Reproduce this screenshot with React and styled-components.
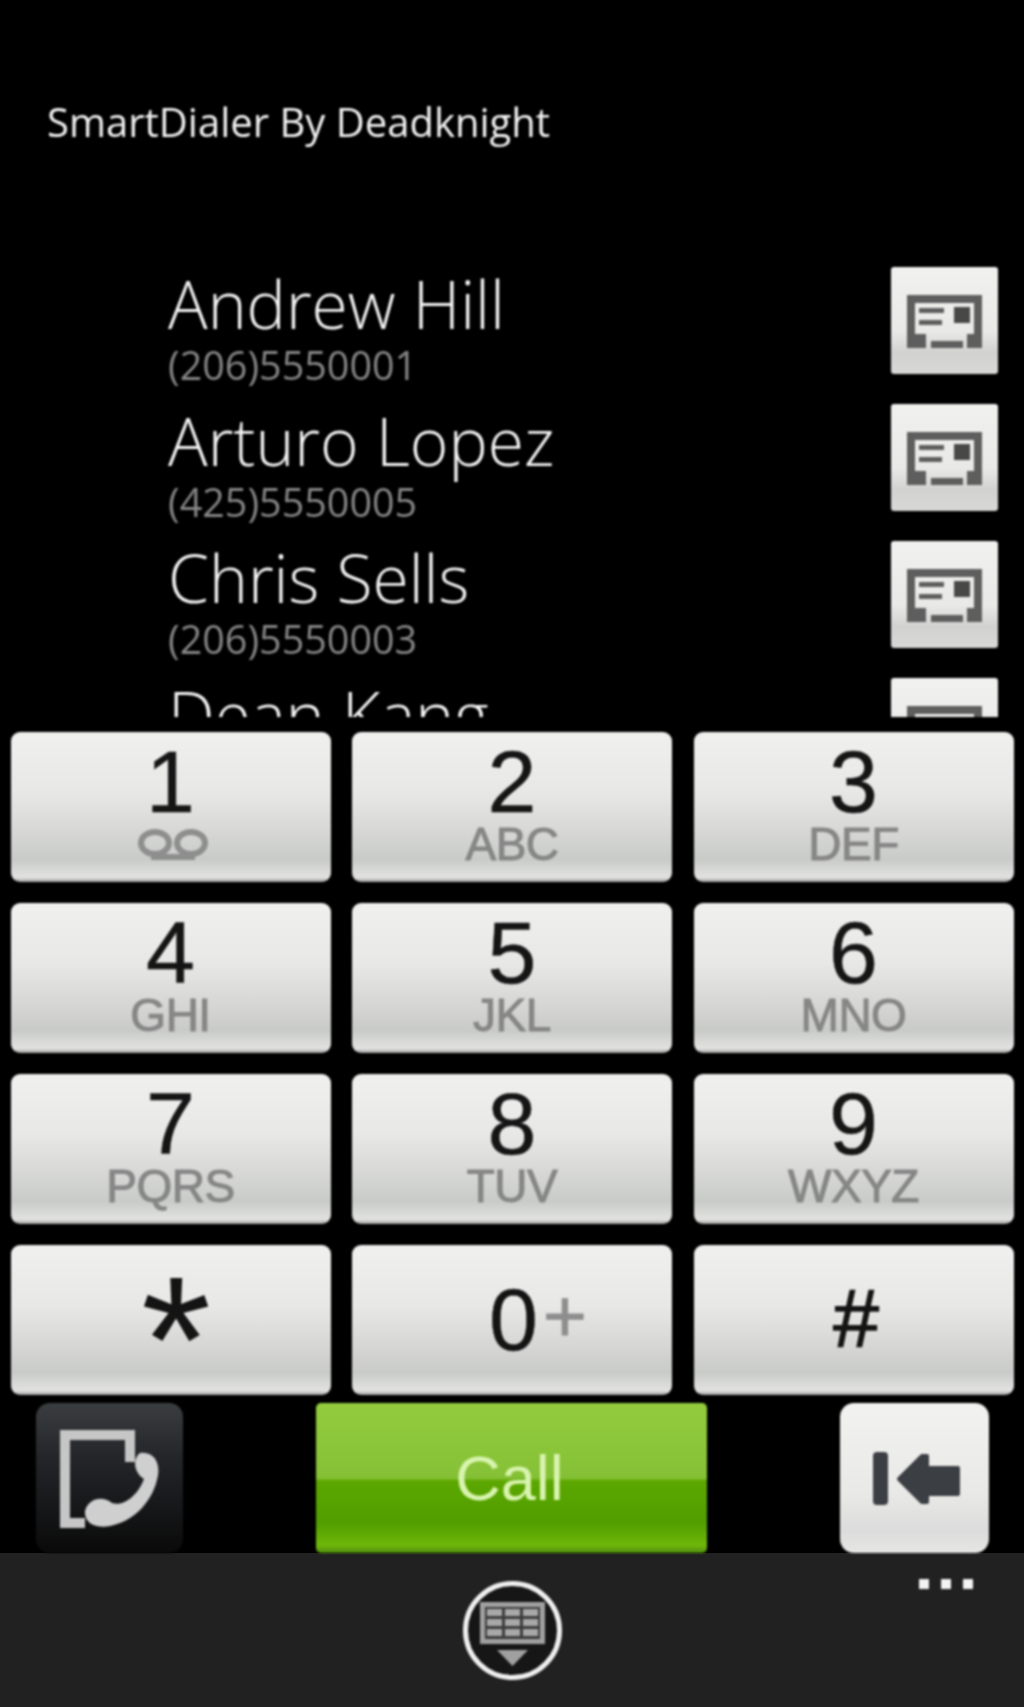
import React from "react";
import styled, { createGlobalStyle } from "styled-components";

const Global = createGlobalStyle`
  html, body {
    margin: 0;
    padding: 0;
    background: #000;
  }
`;

const Page = styled.div`
  width: 1024px;
  height: 1707px;
  background: #000;
  display: flex;
  flex-direction: column;
  overflow: hidden;
`;

const Main = styled.div`
  filter: blur(0.8px);
  flex-shrink: 0;
`;

const Title = styled.div`
  padding: 97px 0 0 47px;
  height: 71px;
  font-family: "Open Sans", sans-serif;
  font-size: 40px;
  line-height: 50px;
  color: #f2f2f2;
`;

const List = styled.div`
  height: 549px;
  padding-top: 99px;
  box-sizing: border-box;
  overflow: hidden;
  display: flex;
  flex-direction: column;
  gap: 30px;
  flex-shrink: 0;
`;

const Row = styled.div`
  display: flex;
  justify-content: space-between;
  align-items: center;
  height: 107px;
  flex-shrink: 0;
  padding: 0 26px 0 168px;
`;

const Person = styled.div`
  display: flex;
  flex-direction: column;
  padding-top: 8px;
`;

const Name = styled.div`
  font-family: "Open Sans", sans-serif;
  font-weight: 300;
  font-size: 66px;
  line-height: 76px;
  color: #f4f4f4;
`;

const Phone = styled.div`
  font-family: "Open Sans", sans-serif;
  font-size: 39.5px;
  line-height: 40px;
  margin-top: 4px;
  color: #858585;
`;

const CardButton = styled.div`
  width: 107px;
  height: 107px;
  box-sizing: border-box;
  border-radius: 3px;
  background: linear-gradient(#f1f1ef 0%, #e9e9e7 60%, #d2d3d1 80%, #d8d8d6 100%);
  display: flex;
  justify-content: center;
  padding-top: 28px;
  flex-shrink: 0;
`;

const Keypad = styled.div`
  display: grid;
  grid-template-columns: repeat(3, 320px);
  grid-auto-rows: 150px;
  column-gap: 21.5px;
  row-gap: 21px;
  padding: 15px 0 0 10.5px;
`;

const Key = styled.div`
  box-sizing: border-box;
  border-radius: 9px;
  background: linear-gradient(#f0f1ef 0%, #e8e9e7 40%, #d6d7d5 68%, #c9cbc9 85%, #e2e3e1 97%, #9c9c9c 100%);
  display: flex;
  flex-direction: column;
  align-items: center;
  color: #151515;
  font-family: "Liberation Sans", Arial, sans-serif;
`;

const Digit = styled.div`
  font-size: 88px;
  line-height: 80px;
  margin-top: 10px;
  height: 80px;
  -webkit-text-stroke: 0.5px #151515;
`;

const Letters = styled.div`
  font-size: 46px;
  line-height: 44px;
  letter-spacing: -0.5px;
  color: #858685;
  -webkit-text-stroke: 1px #858685;
`;

const Mail = styled.svg`
  width: 72px;
  height: 34px;
  margin: 7px 0 0 4px;
`;

const Symbol = styled.div`
  height: 150px;
  display: flex;
  align-items: center;
  justify-content: center;
  font-size: ${(p) => p.$size}px;
  line-height: 1;
  padding: ${(p) => p.$top}px 0 ${(p) => p.$bottom}px ${(p) => p.$left}px;
  box-sizing: border-box;
  color: #141414;
  -webkit-text-stroke: ${(p) => p.$stroke}px #141414;
`;

const Plus = styled.span`
  font-size: 75px;
  margin: 0 0 8px 5px;
  color: #8d8e8d;
  -webkit-text-stroke: 1px #8d8e8d;
`;

const Actions = styled.div`
  display: flex;
  align-items: stretch;
  height: 150px;
  margin-top: 8px;
  padding-left: 36px;
  flex-shrink: 0;
`;

const LogButton = styled.div`
  width: 147px;
  border-radius: 14px;
  background: linear-gradient(#3b3e40 0%, #24262a 35%, #0a0a0a 100%);
`;

const CallButton = styled.div`
  width: 391px;
  margin-left: 133px;
  border-radius: 5px;
  background: linear-gradient(#93cc3e 0%, #85c036 50%, #5ca700 52%, #519e00 80%, #6fb70a 95%, #4f8a10 100%);
  display: flex;
  align-items: center;
  justify-content: center;
  padding-right: 4px;
  box-sizing: border-box;
  font-family: "Liberation Sans", Arial, sans-serif;
  font-size: 63px;
  color: #d8f4ae;
`;

const BackButton = styled.div`
  width: 149px;
  margin-left: 133px;
  border-radius: 14px;
  background: linear-gradient(#f2f2f0 0%, #e9e9e7 60%, #dcdcdc 85%, #e6e6e4 100%);
`;

const AppBar = styled.div`
  flex: 1;
  background: #212121;
  display: grid;
  grid-template-columns: 1fr auto 1fr;
`;

const BarIcon = styled.svg`
  grid-column: 2;
  width: 103px;
  height: 105px;
  margin-top: 25px;
  margin-left: 1px;
  filter: blur(0.8px);
`;

const Dots = styled.div`
  grid-column: 3;
  justify-self: end;
  display: flex;
  gap: 12px;
  margin: 26px 51px 0 0;
  filter: blur(0.8px);
`;

const Dot = styled.div`
  width: 10px;
  height: 10px;
  background: #f4f4f4;
`;

const contacts = [
  { name: "Andrew Hill", phone: "(206)5550001" },
  { name: "Arturo Lopez", phone: "(425)5550005" },
  { name: "Chris Sells", phone: "(206)5550003" },
  { name: "Dean Kang", phone: "(425)5550007" },
];

const keys = [
  { digit: "1", mail: true },
  { digit: "2", letters: "ABC" },
  { digit: "3", letters: "DEF" },
  { digit: "4", letters: "GHI" },
  { digit: "5", letters: "JKL" },
  { digit: "6", letters: "MNO" },
  { digit: "7", letters: "PQRS" },
  { digit: "8", letters: "TUV" },
  { digit: "9", letters: "WXYZ" },
];

function CardIcon() {
  return (
    <svg width="76" height="54" viewBox="0 0 76 54" fill="#5e5e5e">
      <path d="M4 46V4H71V46" fill="none" stroke="#5e5e5e" strokeWidth="8" />
      <rect x="0" y="45" width="19" height="8" />
      <rect x="24" y="46" width="32" height="7" />
      <rect x="60" y="45" width="15" height="8" />
      <rect x="8" y="39" width="11" height="6" />
      <rect x="60" y="39" width="7" height="6" />
      <rect x="12" y="13" width="25" height="5" />
      <rect x="12" y="25" width="23" height="5" />
      <rect x="47" y="12" width="16" height="16" fill="#484848" />
    </svg>
  );
}

function LogIcon() {
  return (
    <svg width="147" height="150" viewBox="0 0 147 150">
      <path d="M49 120H29V32H94V59" fill="none" stroke="#c6c6c6" strokeWidth="10" />
      <path d="M104 50C118 48 124 60 122 72C118 96 100 118 74 123C60 126 48 120 49 108C52 96 66 92 76 100C88 104 102 92 108 76C98 70 96 56 104 50Z" fill="#cfcfcf" />
    </svg>
  );
}

function BackIcon() {
  return (
    <svg width="149" height="150" viewBox="0 0 149 150">
      <rect x="33" y="49" width="15" height="53" rx="4" fill="#3b3e43" />
      <path d="M59 76L82 53H87V65H118V91H87V99H82Z" fill="#3b3e43" stroke="#3b3e43" strokeWidth="4" strokeLinejoin="round" />
    </svg>
  );
}

export default function App() {
  return (
    <Page>
      <Global />
      <Main>
        <Title>SmartDialer By Deadknight</Title>
        <List>
          {contacts.map((c) => (
            <Row key={c.name}>
              <Person>
                <Name>{c.name}</Name>
                <Phone>{c.phone}</Phone>
              </Person>
              <CardButton>
                <CardIcon />
              </CardButton>
            </Row>
          ))}
        </List>
        <Keypad>
          {keys.map((k) => (
            <Key key={k.digit}>
              <Digit>{k.digit}</Digit>
              {k.mail ? (
                <Mail viewBox="0 0 72 34">
                  <ellipse cx="18" cy="14" rx="14" ry="11" fill="none" stroke="#8d8e8d" strokeWidth="6" />
                  <ellipse cx="54" cy="14" rx="14" ry="11" fill="none" stroke="#8d8e8d" strokeWidth="6" />
                  <rect x="14" y="25" width="44" height="6" fill="#8d8e8d" />
                </Mail>
              ) : (
                <Letters>{k.letters}</Letters>
              )}
            </Key>
          ))}
          <Key>
            <Symbol $size={180} $top={39} $bottom={0} $left={11} $stroke={0}>*</Symbol>
          </Key>
          <Key>
            <Symbol $size={88} $top={0} $bottom={0} $left={52} $stroke={0.5}>
              0<Plus>+</Plus>
            </Symbol>
          </Key>
          <Key>
            <Symbol $size={82} $top={0} $bottom={5} $left={5} $stroke={1.5}>#</Symbol>
          </Key>
        </Keypad>
        <Actions>
          <LogButton>
            <LogIcon />
          </LogButton>
          <CallButton>Call</CallButton>
          <BackButton>
            <BackIcon />
          </BackButton>
        </Actions>
      </Main>
      <AppBar>
        <BarIcon viewBox="0 0 103 105">
          <circle cx="51.5" cy="52.5" r="47" fill="#161616" stroke="#f0f0f0" strokeWidth="5" />
          <rect x="19" y="24" width="65" height="42" fill="#a0a0a0" />
          <rect x="24" y="29" width="55" height="32" fill="#3c3c3c" />
          {[0, 1, 2].map((r) =>
            [0, 1, 2].map((c) => (
              <rect key={`${r}-${c}`} x={26 + c * 18} y={31 + r * 10} width="15" height="7" fill="#a8a8a8" />
            ))
          )}
          <path d="M36 72H67L51.5 88Z" fill="#a0a0a0" />
        </BarIcon>
        <Dots>
          <Dot />
          <Dot />
          <Dot />
        </Dots>
      </AppBar>
    </Page>
  );
}
